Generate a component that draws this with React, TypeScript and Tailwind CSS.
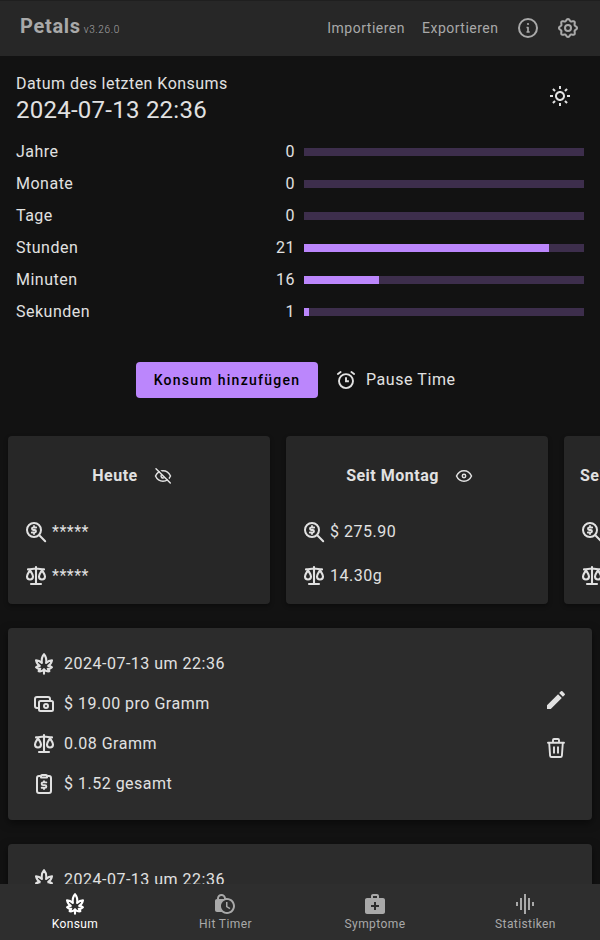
import React from "react";
import { MdEdit, MdGraphicEq, MdLockClock, MdMedicalServices } from "react-icons/md";
import { BiSun } from "react-icons/bi";

type IconProps = { size?: number; children?: React.ReactNode; width?: number };

function Stroke({ size = 24, width = 2, children }: IconProps) {
  return (
    <svg
      width={size}
      height={size}
      viewBox="0 0 24 24"
      fill="none"
      stroke="currentColor"
      strokeWidth={width}
      strokeLinecap="round"
      strokeLinejoin="round"
      className="block shrink-0"
    >
      {children}
    </svg>
  );
}

const gearOutline =
  Array.from({ length: 96 }, (_, i) => {
    const a = (i / 96) * Math.PI * 2;
    const r = 8.1 + 0.95 * Math.cos(8 * a);
    return `${i ? "L" : "M"}${(12 + r * Math.cos(a)).toFixed(2)} ${(12 + r * Math.sin(a)).toFixed(2)}`;
  }).join("") + "Z";

const Leaf = () => (
  <Stroke width={2.100}>
    <path d="M12 2.200C10.200 4.200 9.300 7 9.900 11 8.200 9.300 6.300 8.300 4 8.200c.4 2.400 1.500 4.200 3.800 5.700-1.500 0-2.700.4-3.700 1.400 1.100 1.200 2.400 1.700 4.200 1.600-.9.600-1.500 1.300-1.700 2.300 2.200.4 4.100-.2 5.400-1.900 1.300 1.700 3.200 2.300 5.400 1.900-.2-1-.8-1.700-1.700-2.300 1.800.1 3.100-.4 4.200-1.600-1-1-2.200-1.400-3.700-1.400 2.300-1.500 3.400-3.300 3.800-5.700-2.300.1-4.200 1.100-5.900 2.800.6-4-.3-6.800-2.100-8.800z" />
    <path d="M12 17.500v4.200" />
  </Stroke>
);

const Scale = () => (
  <Stroke width={2.100}>
    <path d="M12 3v17M7 20h10M4 5.400c3 0 5-.9 8-.9s5 .9 8 .9" />
    <path d="M6 6.200C4.700 8.600 3 10.400 3 12.500a3 3 0 0 0 6 0C9 10.400 7.300 8.600 6 6.200zM18 6.200c-1.300 2.400-3 4.200-3 6.300a3 3 0 0 0 6 0c0-2.100-1.700-3.900-3-6.300z" />
  </Stroke>
);

const SearchMoney = () => (
  <Stroke>
    <circle cx="10" cy="10" r="7" />
    <path d="M15.300 15.300l5.900 5.900" />
    <path d="M12.200 7.500H9.200a1.250 1.250 0 0 0 0 2.500h1.600a1.250 1.250 0 0 1 0 2.500H7.800M10 6v1.200M10 12.800V14" strokeWidth={1.800} />
  </Stroke>
);

const Cash = () => (
  <Stroke>
    <path d="M5.500 16H5a2 2 0 0 1-2-2V7a2 2 0 0 1 2-2h11a2 2 0 0 1 2 2v1" />
    <rect x="7" y="9" width="14" height="10" rx="1.500" />
    <circle cx="14" cy="14" r="2" />
  </Stroke>
);

const Clipboard = () => (
  <Stroke>
    <path d="M8 4H7A2 2 0 0 0 5 6v13a2 2 0 0 0 2 2h10a2 2 0 0 0 2-2V6a2 2 0 0 0-2-2h-1" />
    <path d="M10 3h4a1 1 0 0 1 1 1v1.500H9V4a1 1 0 0 1 1-1z" />
    <path d="M14.300 10.400H11a1.300 1.300 0 0 0 0 2.700h2a1.300 1.300 0 0 1 0 2.700H9.700M12 9.300v1M12 16v1" strokeWidth={1.900} />
  </Stroke>
);

const Trash = () => (
  <Stroke width={1.900}>
    <path d="M4 6.800h16M9 6V4a1 1 0 0 1 1-1h4a1 1 0 0 1 1 1v2M5.200 7l.9 12.600A1.500 1.500 0 0 0 7.600 21h8.800a1.500 1.500 0 0 0 1.500-1.400L18.800 7" />
    <path d="M10 10.500v7M14 10.500v7" strokeLinecap="butt" />
  </Stroke>
);

const Alarm = () => (
  <Stroke size={20} width={2.300}>
    <circle cx="12" cy="13.300" r="8.400" />
    <path d="M12 8.800V13.500h3.500" strokeLinecap="butt" strokeLinejoin="miter" />
    <path d="M2.300 4.800l3.200-2.300M21.700 4.800l-3.200-2.300" />
  </Stroke>
);

const Info = () => (
  <Stroke>
    <circle cx="12" cy="12" r="9" />
    <path d="M10.500 11.500H12V16M10.500 16h3.200" strokeWidth={1.700} strokeLinecap="butt" />
    <circle cx="12" cy="8" r="1.100" fill="currentColor" stroke="none" />
  </Stroke>
);

const Gear = () => (
  <Stroke>
    <path d={gearOutline} />
    <circle cx="12" cy="12" r="3" />
  </Stroke>
);

function Eye({ hidden }: { hidden?: boolean }) {
  return (
    <svg width="18" height="18" viewBox="0 0 18 18" fill="none" stroke="currentColor" strokeWidth="1.500" strokeLinecap="round" className="block shrink-0">
      <path d="M1.500 9C3.200 5.300 5.800 3.800 9 3.800s5.800 1.500 7.500 5.200c-1.700 3.700-4.300 5.200-7.500 5.200S3.200 12.700 1.500 9z" />
      {hidden ? (
        <>
          <path d="M4.500 2.300L17 14.700" stroke="#272727" />
          <path d="M7.200 8.300A2 2 0 0 0 9.700 10.900" />
          <path d="M2 1.800L16.300 16" />
        </>
      ) : (
        <circle cx="9" cy="9" r="1.700" />
      )}
    </svg>
  );
}

const times = [
  { label: "Jahre", value: 0, max: 1 },
  { label: "Monate", value: 0, max: 12 },
  { label: "Tage", value: 0, max: 30 },
  { label: "Stunden", value: 21, max: 24 },
  { label: "Minuten", value: 16, max: 60 },
  { label: "Sekunden", value: 1, max: 60 },
];

function SummaryCard({ title, money, weight, hidden, wide }: { title: string; money: string; weight: string; hidden?: boolean; wide?: boolean }) {
  return (
    <section className="h-[168px] w-[262px] shrink-0 overflow-hidden rounded bg-[#272727] px-4 pt-4 shadow-[0_2px_4px_rgba(0,0,0,0.35)]">
      <div className={`flex h-12 items-center whitespace-nowrap ${wide ? "gap-4" : hidden ? "justify-center gap-4 pr-[14px]" : "justify-center gap-4 pr-[15px]"}`}>
        <h2 className="font-bold">{title}</h2>
        <Eye hidden={hidden} />
      </div>
      <div className="mt-5 flex h-6 items-center gap-1">
        <SearchMoney />
        <span>{money}</span>
      </div>
      <div className="mt-5 flex h-6 items-center gap-1">
        <Scale />
        <span>{weight}</span>
      </div>
    </section>
  );
}

function Entry() {
  const rows = [
    { icon: <Leaf />, text: "2024-07-13 um 22:36" },
    { icon: <Cash />, text: "$ 19.00 pro Gramm" },
    { icon: <Scale />, text: "0.08 Gramm" },
    { icon: <Clipboard />, text: "$ 1.52 gesamt" },
  ];
  return (
    <article className="flex h-48 shrink-0 items-center justify-between rounded bg-[#2c2c2c] px-6 shadow-[0_3px_8px_rgba(0,0,0,0.5)]">
      <div className="flex flex-col gap-4">
        {rows.map((r) => (
          <div key={r.text} className="flex h-6 items-center gap-2">
            {r.icon}
            <span>{r.text}</span>
          </div>
        ))}
      </div>
      <div className="flex flex-col gap-6">
        <MdEdit size={24} />
        <Trash />
      </div>
    </article>
  );
}

const tabs = [
  { label: "Konsum", icon: <Leaf /> },
  { label: "Hit Timer", icon: <MdLockClock size={24} /> },
  { label: "Symptome", icon: <MdMedicalServices size={24} /> },
  { label: "Statistiken", icon: <MdGraphicEq size={24} /> },
];

export default function App() {
  return (
    <div className="flex h-[940px] w-[600px] flex-col overflow-hidden bg-[#121212] font-['Roboto',sans-serif] text-base leading-6 tracking-[0.5px] text-[#e1e1e1]">
      <header className="flex h-14 shrink-0 items-center bg-[#272727] px-5 text-[#a9a9a9] shadow-[inset_0_1px_0_#1f1f1f]">
        <div className="flex items-baseline gap-[3px] pb-[3px]">
          <h1 className="text-xl font-bold tracking-[0.7px]">Petals</h1>
          <span className="text-[10px] font-light tracking-[0.6px]">v3.26.0</span>
        </div>
        <nav className="ml-auto flex items-center text-sm">
          <span>Importieren</span>
          <span className="ml-[17px]">Exportieren</span>
          <span className="ml-[17.500px]"><Info /></span>
          <span className="ml-4"><Gear /></span>
        </nav>
      </header>

      <main className="flex min-h-0 flex-1 flex-col overflow-hidden">
        <div className="flex h-20 shrink-0 items-center justify-between pr-7 pl-4">
          <div className="pt-[3px]">
            <p className="leading-6 tracking-[0.46px]">Datum des letzten Konsums</p>
            <p className="text-2xl leading-7 tracking-[0.25px]">2024-07-13 22:36</p>
          </div>
          <BiSun size={24} />
        </div>

        <div className="flex shrink-0 flex-col px-4">
          {times.map((t) => (
            <div key={t.label} className="flex h-8 items-center">
              <span className="flex-1">{t.label}</span>
              <span className="mr-[9px] text-right">{t.value}</span>
              <div className="h-2 w-[280px] bg-[#3d2e4c]">
                <div className="h-full bg-[#bb86fc]" style={{ width: `${(t.value / t.max) * 100}%` }} />
              </div>
            </div>
          ))}
        </div>

        <div className="mt-[34px] flex h-9 shrink-0 items-center pl-[136px]">
          <button className="h-9 w-[182px] rounded bg-[#bb86fc] text-sm font-medium tracking-[1.28px] text-black">Konsum hinzufügen</button>
          <div className="ml-[18px] flex items-center gap-[10px]">
            <Alarm />
            <span className="tracking-[0.57px]">Pause Time</span>
          </div>
        </div>

        <div className="mt-[38px] flex shrink-0 gap-4 pl-2">
          <SummaryCard title="Heute" money="*****" weight="*****" hidden />
          <SummaryCard title="Seit Montag" money="$ 275.90" weight="14.30g" />
          <SummaryCard title="Seit Monatsanfang" money="$ 275.90" weight="14.30g" wide />
        </div>

        <div className="mt-6 flex flex-col gap-6 px-2">
          <Entry />
          <Entry />
        </div>
      </main>

      <footer className="grid h-14 shrink-0 grid-cols-4 bg-[#2e2e2e] text-xs leading-4 tracking-[0.4px] text-[#a9a9a9]">
        {tabs.map((t, i) => (
          <div key={t.label} className={`flex flex-col items-center pt-2 ${i === 0 ? "text-white" : ""}`}>
            {t.icon}
            <span className={i % 2 ? "pl-px" : ""}>{t.label}</span>
          </div>
        ))}
      </footer>
    </div>
  );
}
